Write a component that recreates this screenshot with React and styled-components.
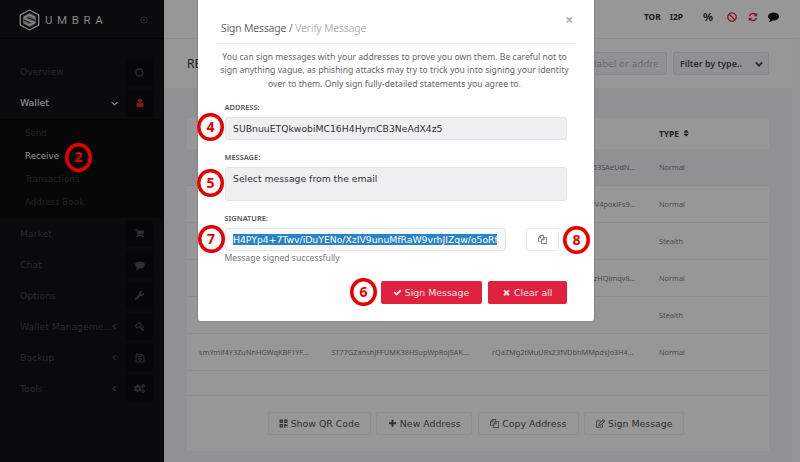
import React from 'react';
import styled, { createGlobalStyle, css } from 'styled-components';
import { FaShoppingCart, FaWrench, FaRegSave, FaCogs, FaBan, FaQrcode, FaRegEdit, FaSort } from 'react-icons/fa';

const GlobalStyle = createGlobalStyle`
  * { box-sizing: border-box; }
  body { margin: 0; background: #8f9193; }
`;
const dejavu = '"DejaVu Sans", sans-serif';
const noto = '"Noto Sans", sans-serif';

/* Wide-stroke glyphs drawn on a 1792 unit grid */
const GLYPHS = {
  times: 'M1490 1322q0 40-28 68l-136 136q-28 28-68 28t-68-28l-294-294-294 294q-28 28-68 28t-68-28l-136-136q-28-28-28-68t28-68l294-294-294-294q-28-28-28-68t28-68l136-136q28-28 68-28t68 28l294 294 294-294q28-28 68-28t68 28l136 136q28 28 28 68t-28 68l-294 294 294 294q28 28 28 68z',
  check: 'M1671 566q0 40-28 68l-724 724-136 136q-28 28-68 28t-68-28l-136-136-362-362q-28-28-28-68t28-68l136-136q28-28 68-28t68 28l294 295 656-657q28-28 68-28t68 28l136 136q28 28 28 68z',
  copy: 'M1696 384q40 0 68 28t28 68v1216q0 40-28 68t-68 28h-960q-40 0-68-28t-28-68v-288h-544q-40 0-68-28t-28-68v-672q0-40 20-88t48-76l408-408q28-28 76-48t88-20h416q40 0 68 28t28 68v328q68-40 128-40h416zm-544 213l-299 299h299v-299zm-640-384l-299 299h299v-299zm196 647l316-316v-416h-384v416q0 40-28 68t-68 28h-416v640h512v-256q0-40 20-88t48-76zm956 804v-1152h-384v416q0 40-28 68t-68 28h-416v640h896z',
  plus: 'M1600 736v192q0 40-28 68t-68 28h-416v416q0 40-28 68t-68 28h-192q-40 0-68-28t-28-68v-416h-416q-40 0-68-28t-28-68v-192q0-40 28-68t68-28h416v-416q0-40 28-68t68-28h192q40 0 68 28t28 68v416h416q40 0 68 28t28 68z',
  user: 'M1536 1399q0 109-62.5 187t-150.5 78h-854q-88 0-150.5-78t-62.5-187q0-85 8.5-160.5t31.5-152 58.5-131 94-89 134.5-34.5q131 128 313 128t313-128q76 0 134.5 34.5t94 89 58.5 131 31.5 152 8.5 160.5zm-256-887q0 159-112.5 271.5t-271.5 112.5-271.5-112.5-112.5-271.5 112.5-271.5 271.5-112.5 271.5 112.5 112.5 271.5z',
  refresh: 'M1639 1056q0 5-1 7-64 268-268 434.5t-478 166.5q-146 0-282.5-55t-243.5-157l-129 129q-19 19-45 19t-45-19-19-45v-448q0-26 19-45t45-19h448q26 0 45 19t19 45-19 45l-137 137q71 66 161 102t187 36q134 0 250-65t186-179q11-17 53-117 8-23 30-23h192q13 0 22.5 9.5t9.5 22.5zm25-800v448q0 26-19 45t-45 19h-448q-26 0-45-19t-19-45 19-45l138-138q-148-137-349-137-134 0-250 65t-186 179q-11 17-53 117-8 23-30 23h-199q-13 0-22.5-9.5t-9.5-22.5v-7q65-268 270-434.5t480-166.5q146 0 284 55.5t245 156.5l130-129q19-19 45-19t45 19 19 45z',
  comment: 'M1792 896q0 174-120 321.5t-326 233-450 85.5q-70 0-145-8-198 175-460 242-49 14-114 22-17 2-30.5-9t-17.5-29v-1q-3-4-.5-12t2-10 4.5-9.5l6-9 7-8.5 8-9q7-8 31-34.5t34.5-38 31-39.5 32.5-51 27-59 26-76q-157-89-247.5-220t-90.5-281q0-130 71-248.5t191-204.5 286-136.5 348-50.5q244 0 450 85.5t326 233 120 321.5z',
};
const Glyph = ({ name, size = 10 }) => (
  <svg width={size} height={size} viewBox="0 0 1792 1792" fill="currentColor"><path d={GLYPHS[name]} /></svg>
);
const Chevron = ({ d, size = 7, stroke = 1.2 }) => (
  <svg width={size} height={size} viewBox="0 0 7 7" fill="none" stroke="currentColor" strokeWidth={stroke}><path d={d} /></svg>
);

const Shell = styled.div`
  display: flex; position: relative; width: 800px; height: 462px; overflow: hidden;
  font-family: ${noto}; background: #8f9193;
`;

/* Sidebar */
const Sidebar = styled.aside`
  flex: 0 0 164px; min-width: 0; height: 462px; background: #0a0a0c; border-right: 1px solid #050506;
`;
const Brand = styled.div`
  display: flex; align-items: center; height: 39px; padding: 1px 15px 0 18.5px;
  border-bottom: 1px solid #060608; color: #858585;
`;
const BrandName = styled.span`
  flex: 1; margin-left: 5.5px; font: 11.5px Roboto, sans-serif; letter-spacing: 4.6px; white-space: nowrap;
`;
const Nav = styled.nav`padding-top: 17.5px;`;
const NavItem = styled.div`
  display: flex; align-items: center; height: 31px; padding: 0 10px 0 20px;
  font: 9.3px ${dejavu}; color: ${p => (p.$active ? '#8c8c8c' : '#29292d')};
  ${p => p.$active && css`-webkit-text-stroke: 0.2px;`}
`;
const NavLabel = styled.span`flex: 1; min-width: 0; white-space: nowrap; padding-bottom: 0.5px;`;
const NavArrow = styled.span`display: flex; width: 8px; margin-right: 7px; -webkit-text-stroke: 0;`;
const NavIcon = styled.span`
  display: flex; align-items: center; justify-content: center; flex: none; width: 27px; height: 27px;
  background: #070709; font-size: ${p => p.$size || 9}px; color: ${p => (p.$active ? '#8d1428' : '#2e2e31')};
`;
const SubNav = styled.div`
  height: 99.5px; padding: 2px 0 0 25px; background: #070708; border-top: 1px solid #050506;
`;
const SubItem = styled.div`
  height: 23.2px; line-height: 23.2px; font-family: ${dejavu}; font-size: 8.7px;
  color: ${p => (p.$active ? '#969696' : '#222226')};
`;

/* Page */
const Page = styled.main`flex: 0 0 628px; display: flex; flex-direction: column;`;
const Gutter = styled.div`flex: 1; background: #959595;`;
const Main = styled.div`flex: 1; display: flex; flex-direction: column;`;
const Content = styled.div`flex: 1; display: flex;`;
const TopBar = styled.header`
  display: flex; align-items: center; justify-content: flex-end; height: 39px; padding: 0 21px 5px 0;
  background: #979797; border-bottom: 1px solid #8e8e8e; color: #0b0b0b;
`;
const NetLabel = styled.span`font-size: 8.4px; font-weight: 700; margin-right: 9px; color: #1b1b1b;`;
const TopIcon = styled.span`
  display: flex; justify-content: center; align-items: center; width: 11px; margin-left: ${p => p.$gap || 10}px;
  font-size: 10px; color: ${p => (p.$alert ? '#8b1428' : '#0b0b0b')};
`;
const Percent = styled.span`margin-left: 11px; font-size: 11.5px; font-weight: 600; color: #0b0b0b;`;
const TitleBar = styled.div`
  display: flex; align-items: center; height: 49px; padding: 0 23px 0 23px; background: #979797;
`;
const PageTitle = styled.h1`flex: 1; margin: 0; padding-bottom: 1px; font-size: 12px; font-weight: 400; color: #202022;`;
const Field = styled.div`
  display: flex; align-items: center; height: 23px; border: 1px solid #86888b; border-radius: 2px; background: #8f9194;
`;
const Search = styled(Field)`
  width: 127px; margin-right: 6px; padding: 0 8px 0 18px; font: 9.3px ${dejavu}; color: #696b6e;
`;
const Clip = styled.span`overflow: hidden; white-space: nowrap;`;
const Select = styled(Field)`
  width: 96px; padding: 0 5px 0 6px; justify-content: space-between;
  font-size: 8.95px; font-weight: 600; color: #2b2b2e;
`;
const Panel = styled.section`
  display: flex; flex-direction: column; width: 582px; height: 333px; margin: 30px 0 0 23px; background: #979797;
`;
const grid = css`display: grid; grid-template-columns: 132.5px 160.5px 167px 1fr; align-items: center; padding-left: 12px;`;
const HeadRow = styled.div`
  ${grid} height: 31px; font-size: 8.4px; font-weight: 700; color: #242427;
`;
const TypeHead = styled.span`display: flex; align-items: center; gap: 3px; grid-column: 4;`;
const Row = styled.div`
  ${grid} height: 37px; font-size: 7.35px; color: #4b4b4d; border-bottom: 1px solid #8c8c8c;
  background: ${p => (p.$hover ? '#8f9193' : 'transparent')};
`;
const Cell = styled.span`
  grid-column: ${p => p.$col}; white-space: nowrap;
  ${p => p.$tail && css`justify-self: end; margin-right: 23.5px;`}
`;
const Spacer = styled.div`height: 25px; border-bottom: 1px solid #8c8c8c;`;
const Actions = styled.div`
  flex: 1; display: flex; align-items: center; justify-content: center; gap: 5.5px; padding-right: 4px;
`;
const Action = styled.button`
  display: flex; align-items: center; justify-content: center; gap: 3px; width: ${p => p.$w}px; height: 23px; padding: 0;
  border: 1px solid #8e8e8e; border-radius: 2px; background: transparent;
  font: 9.4px ${dejavu}; color: #303032; white-space: nowrap;
  svg { flex: none; font-size: 9px; }
`;

/* Dialog */
const Dialog = styled.div`
  position: absolute; z-index: 2; left: 197.5px; top: -4px; width: 396px; height: 325px;
  padding: 4px 17px 0 17px; background: #fff; border-radius: 3px; box-shadow: 0 0 2px rgba(0,0,0,.35);
`;
const DialogHead = styled.div`
  display: flex; justify-content: space-between; height: 43.5px; padding: 0 3px 0 6.5px; border-bottom: 1px solid #efefef;
`;
const DialogTitle = styled.h2`
  margin: 0; padding-top: 19px; font: 300 10.4px/18px ${noto}; color: #3c3c3c; -webkit-text-stroke: 0.1px;
`;
const Muted = styled.span`color: #a3a3a3;`;
const Close = styled.span`padding-top: 9px; color: #b4b4b4; font: 700 15px/20px ${noto};`;
const Intro = styled.p`
  margin: 7px 3px 0 1px; height: 52px; text-align: center; font-size: 8.65px; line-height: 13.5px; color: #666; white-space: nowrap;
`;
const Form = styled.div`padding: 0 9.5px 0 10px;`;
const Label = styled.div`
  height: 14px; font-size: 7.45px; font-weight: 600; line-height: 9px; color: #555;
`;
const Input = styled.div`
  width: ${p => p.$w || 342}px; height: ${p => p.$h || 23}px; margin-bottom: ${p => p.$mb || 0}px; padding: 0 7.5px;
  border: 1px solid #e2e3e5; border-radius: 3px; background: ${p => p.$bg || '#eeeff1'};
  font: 9.27px/22px ${dejavu}; color: #333;
`;
const Selected = styled.span`
  display: block; width: 264px; height: 11px; margin-top: 5.5px; overflow: hidden; line-height: 12px;
  background: #2a83c4; color: #fff; white-space: nowrap;
`;
const SignatureLine = styled.div`display: flex; gap: 20px;`;
const CopyButton = styled.button`
  display: flex; align-items: center; justify-content: center; width: 33px; height: 23px; padding: 0;
  border: 1px solid #ececec; border-radius: 2px; background: #fff; color: #555;
`;
const Status = styled.div`height: 30px; line-height: 15px; font-size: 8.6px; color: #777;`;
const Buttons = styled.div`display: flex; justify-content: flex-end; gap: 6px;`;
const Primary = styled.button`
  display: flex; align-items: center; justify-content: center; gap: 3px; width: ${p => p.$w}px; height: 23.5px; padding: 0;
  border: 0; border-radius: 2px; background: #e1213d; color: #fbe3e7; font: 9.4px ${dejavu};
`;
const Step = styled.span`
  position: absolute; z-index: 3; left: ${p => p.$x - 13.5}px; top: ${p => p.$y - 14}px;
  display: flex; align-items: center; justify-content: center; width: 27px; height: 28.5px;
  box-shadow: inset 0 0 0 3.5px #e80000; border-radius: 50%; background: ${p => (p.$dark ? 'transparent' : '#fff')};
  font: 700 14px/20px "Open Sans", sans-serif; color: #e80000;
`;

const Logo = () => (
  <svg width="21" height="22" viewBox="0 0 21 22" fill="none" stroke="#808080" strokeWidth="1.4">
    <path d="M10.5 1L19.7 6v10.2L10.5 21 1.3 16.2V6z" />
    <path d="M10.5 4L17 7.5v7L10.5 18 4 14.5v-7z" fill="#5b5b5b" stroke="none" />
    <path d="M15.6 8.4l-5.1-2.8-4.8 2.7v1.6l9.6 3.6v.6" strokeWidth="1.5" />
    <path d="M5.4 13.6l5.1 2.8 4.8-2.6" strokeWidth="1.5" />
    <path d="M8.6 8.6l7.6 3M4.8 10.8l6.2 3" stroke="#0a0a0c" strokeWidth=".9" />
  </svg>
);
const Target = () => (
  <svg width="8" height="8" viewBox="0 0 8 8" stroke="#29292d" fill="none"><circle cx="4" cy="4" r="3.1" /><circle cx="4" cy="4" r=".8" fill="#29292d" /></svg>
);
const Ring = () => (
  <svg width="9" height="9" viewBox="0 0 9 9" stroke="currentColor" fill="none" strokeWidth="1.3"><circle cx="4.5" cy="4.5" r="3.5" /></svg>
);
const Keys = () => (
  <svg width="10" height="10" viewBox="0 0 10 10" stroke="currentColor" fill="none" strokeWidth="1.1">
    <ellipse cx="3.5" cy="3.4" rx="2.8" ry="2" transform="rotate(-40 3.5 3.4)" />
    <path d="M4.8 4.6L9.2 8.2M6.2 5.8L5.2 7.2M7.8 7L6.8 8.6M7 5h2" />
  </svg>
);

const LEFT = 'M4.8 1L2 3.5l2.8 2.5';
const DOWN = 'M.7 2.1l2.8 2.8 2.8-2.8';
const upper = [
  { label: 'Overview', icon: <Ring /> },
  { label: 'Wallet', icon: <Glyph name="user" size={10} />, active: true },
];
const lower = [
  { label: 'Market', icon: <FaShoppingCart /> },
  { label: 'Chat', icon: <Glyph name="comment" size={10} /> },
  { label: 'Options', icon: <FaWrench /> },
  { label: 'Wallet Manageme...', icon: <Keys />, arrow: true },
  { label: 'Backup', icon: <FaRegSave />, arrow: true, size: 10 },
  { label: 'Tools', icon: <FaCogs />, arrow: true, size: 11 },
];
const Item = ({ label, icon, active, arrow, size }) => (
  <NavItem $active={active}>
    <NavLabel>{label}</NavLabel>
    {(active || arrow) && <NavArrow><Chevron d={active ? DOWN : LEFT} /></NavArrow>}
    <NavIcon $active={active} $size={size}>{icon}</NavIcon>
  </NavItem>
);
const rows = [
  { key: '53SAeUdN...', type: 'Normal', hover: true },
  { key: 'TV4poxiFs9...', type: 'Normal' },
  { type: 'Stealth' },
  { key: 'zHQimqv8...', type: 'Normal' },
  { type: 'Stealth' },
];

export default function App() {
  return (
    <Shell>
      <GlobalStyle />
      <Sidebar>
        <Brand><Logo /><BrandName>UMBRA</BrandName><Target /></Brand>
        <Nav>
          {upper.map(i => <Item key={i.label} {...i} />)}
          <SubNav>
            {['Send', 'Receive', 'Transactions', 'Address Book'].map(s => (
              <SubItem key={s} $active={s === 'Receive'}>{s}</SubItem>
            ))}
          </SubNav>
          {lower.map(i => <Item key={i.label} {...i} />)}
        </Nav>
      </Sidebar>
      <Main>
        <TopBar>
          <NetLabel>TOR</NetLabel><NetLabel>I2P</NetLabel>
          <Percent>%</Percent>
          <TopIcon $alert $gap={13}><FaBan /></TopIcon>
          <TopIcon $alert><Glyph name="refresh" size={10} /></TopIcon>
          <TopIcon><Glyph name="comment" size={11} /></TopIcon>
        </TopBar>
        <Content>
          <Page>
            <TitleBar>
              <PageTitle>RECEIVE</PageTitle>
              <Search><Clip>Search label or address</Clip></Search>
              <Select>Filter by type..<Chevron d={DOWN} size={8} stroke={1.7} /></Select>
            </TitleBar>
            <Panel>
              <HeadRow><TypeHead>TYPE<FaSort /></TypeHead></HeadRow>
              {rows.map((r, i) => (
                <Row key={i} $hover={r.hover}>
                  {r.key && <Cell $col={3} $tail>{r.key}</Cell>}
                  <Cell $col={4}>{r.type}</Cell>
                </Row>
              ))}
              <Row>
                <Cell $col={1}>smYmif4Y3ZuNnHGWqKBF1YF...</Cell>
                <Cell $col={2}>ST77GZanshJFFUMK38HSupWpRoj9AK...</Cell>
                <Cell $col={3}>rQaZMg2tMuURsZ3fVDbhMMpdsJo3H4...</Cell>
                <Cell $col={4}>Normal</Cell>
              </Row>
              <Spacer />
              <Actions>
                <Action $w={103}><FaQrcode />Show QR Code</Action>
                <Action $w={96}><Glyph name="plus" size={9} />New Address</Action>
                <Action $w={101}><Glyph name="copy" size={9} />Copy Address</Action>
                <Action $w={100}><FaRegEdit />Sign Message</Action>
              </Actions>
            </Panel>
          </Page>
          <Gutter />
        </Content>
      </Main>

      <Dialog>
        <DialogHead>
          <DialogTitle>Sign Message / <Muted>Verify Message</Muted></DialogTitle>
          <Close>×</Close>
        </DialogHead>
        <Intro>
          You can sign messages with your addresses to prove you own them. Be careful not to<br />
          sign anything vague, as phishing attacks may try to trick you into signing your identity<br />
          over to them. Only sign fully-detailed statements you agree to.
        </Intro>
        <Form>
          <Label>ADDRESS:</Label>
          <Input $mb={13}>SUBnuuETQkwobiMC16H4HymCB3NeAdX4z5</Input>
          <Label>MESSAGE:</Label>
          <Input $h={34} $mb={13}>Select message from the email</Input>
          <Label>SIGNATURE:</Label>
          <SignatureLine>
            <Input $w={281} $bg="#f7f8f8"><Selected>H4PYp4+7Twv/iDuYENo/XzIV9unuMfRaW9vrhJIZqw/o5oRf</Selected></Input>
            <CopyButton><Glyph name="copy" size={9} /></CopyButton>
          </SignatureLine>
          <Status>Message signed successfully</Status>
          <Buttons>
            <Primary $w={101}><Glyph name="check" size={9} />Sign Message</Primary>
            <Primary $w={79.5}><Glyph name="times" size={9} />Clear all</Primary>
          </Buttons>
        </Form>
      </Dialog>

      <Step $x={78.5} $y={157} $dark>2</Step>
      <Step $x={210.5} $y={126.5}>4</Step>
      <Step $x={210.5} $y={182.5}>5</Step>
      <Step $x={363.5} $y={291.5}>6</Step>
      <Step $x={211} $y={238.5}>7</Step>
      <Step $x={576.5} $y={239.5}>8</Step>
    </Shell>
  );
}
